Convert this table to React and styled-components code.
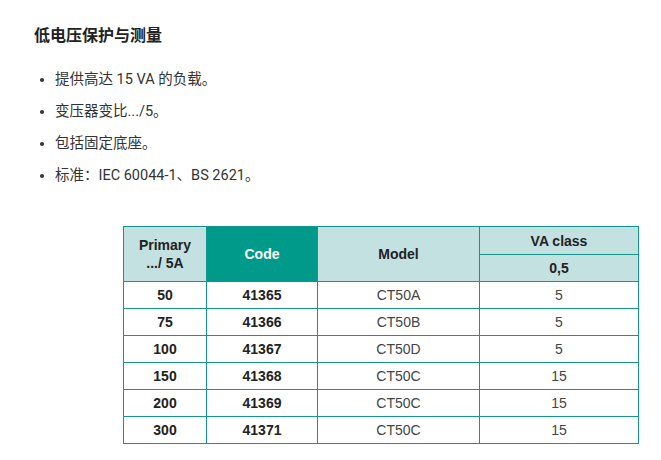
import React from 'react';
import styled, { createGlobalStyle } from 'styled-components';

const Global = createGlobalStyle`
  body {
    margin: 0;
    background: #fff;
    font-family: Roboto, "Noto Sans CJK SC", sans-serif;
    color: #333;
  }
`

const Page = styled.div`
  padding: 24px 0 0 34px;
`

const Title = styled.h3`
  margin: 0;
  font-size: 16px;
  line-height: 24px;
  font-weight: 700;
  color: #222;
`

const List = styled.ul`
  margin: 22px 0 0 0;
  padding: 0 0 0 21px;
  font-size: 14.5px;
  line-height: 20px;
`

const Item = styled.li`
  margin-bottom: 12px;
  &::marker {
    color: #333;
  }
`

const Wrap = styled.div`
  margin: 40px 0 0 89px;
`

const Table = styled.table`
  border-collapse: collapse;
  width: 515px;
  font-family: "Liberation Sans", Arial, sans-serif;
  font-size: 14px;
  color: #222;
  table-layout: fixed;
`

const Head = styled.th`
  border: 1px solid #13978a;
  background: ${p => (p.$dark ? '#009a8a' : '#c2e1e0')};
  color: ${p => (p.$dark ? '#fff' : '#222')};
  font-weight: 700;
  height: ${p => p.$h || 26}px;
  padding: 0;
  line-height: 18px;
  text-align: center;
`

const Cell = styled.td`
  border: 1px solid #13978a;
  height: 26px;
  padding: 0;
  text-align: center;
  font-weight: ${p => (p.$bold ? 700 : 400)};
  color: ${p => (p.$bold ? '#222' : '#444')};
`

const rows = [
  ['50', '41365', 'CT50A', '5'],
  ['75', '41366', 'CT50B', '5'],
  ['100', '41367', 'CT50D', '5'],
  ['150', '41368', 'CT50C', '15'],
  ['200', '41369', 'CT50C', '15'],
  ['300', '41371', 'CT50C', '15'],
]

export default function App() {
  return (
    <Page>
      <Global />
      <Title>低电压保护与测量</Title>
      <List>
        <Item>提供高达 15 VA 的负载。</Item>
        <Item>变压器变比.../5。</Item>
        <Item>包括固定底座。</Item>
        <Item>标准：IEC 60044-1、BS 2621。</Item>
      </List>
      <Wrap>
        <Table>
          <colgroup>
            <col style={{ width: 83 }} />
            <col style={{ width: 111 }} />
            <col style={{ width: 162 }} />
            <col style={{ width: 159 }} />
          </colgroup>
          <thead>
            <tr>
              <Head rowSpan={2}>Primary<br />.../ 5A</Head>
              <Head rowSpan={2} $dark>Code</Head>
              <Head rowSpan={2}>Model</Head>
              <Head $h={27}>VA class</Head>
            </tr>
            <tr>
              <Head>0,5</Head>
            </tr>
          </thead>
          <tbody>
            {rows.map(r => (
              <tr key={r[1]}>
                <Cell $bold>{r[0]}</Cell>
                <Cell $bold>{r[1]}</Cell>
                <Cell>{r[2]}</Cell>
                <Cell>{r[3]}</Cell>
              </tr>
            ))}
          </tbody>
        </Table>
      </Wrap>
    </Page>
  )
}
